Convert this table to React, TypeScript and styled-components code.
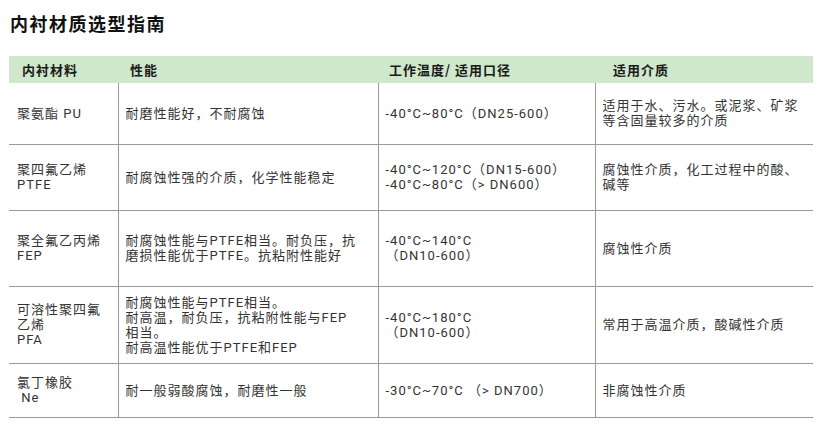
import styled, { createGlobalStyle } from 'styled-components';

const GlobalStyle = createGlobalStyle`
  body {
    margin: 0;
    background: #fff;
    font-family: Roboto, "Noto Sans CJK SC", sans-serif;
  }
`;

interface Row {
  material: string[];
  performance: string[];
  temperature: string[];
  medium: string[];
  height: number;
}

const rows: Row[] = [
  {
    material: ['聚氨酯 PU'],
    performance: ['耐磨性能好，不耐腐蚀'],
    temperature: ['-40°C~80°C（DN25-600）'],
    medium: ['适用于水、污水。或泥浆、矿浆', '等含固量较多的介质'],
    height: 61,
  },
  {
    material: ['聚四氟乙烯', 'PTFE'],
    performance: ['耐腐蚀性强的介质，化学性能稳定'],
    temperature: ['-40°C~120°C（DN15-600）', '-40°C~80°C（> DN600）'],
    medium: ['腐蚀性介质，化工过程中的酸、', '碱等'],
    height: 66,
  },
  {
    material: ['聚全氟乙丙烯', 'FEP'],
    performance: ['耐腐蚀性能与PTFE相当。耐负压，抗', '磨损性能优于PTFE。抗粘附性能好'],
    temperature: ['-40°C~140°C', '（DN10-600）'],
    medium: ['腐蚀性介质'],
    height: 76,
  },
  {
    material: ['可溶性聚四氟', '乙烯', 'PFA'],
    performance: ['耐腐蚀性能与PTFE相当。', '耐高温，耐负压，抗粘附性能与FEP', '相当。', '耐高温性能优于PTFE和FEP'],
    temperature: ['-40°C~180°C', '（DN10-600）'],
    medium: ['常用于高温介质，酸碱性介质'],
    height: 77,
  },
  {
    material: ['氯丁橡胶', '\u00a0Ne'],
    performance: ['耐一般弱酸腐蚀，耐磨性一般'],
    temperature: ['-30°C~70°C （> DN700）'],
    medium: ['非腐蚀性介质'],
    height: 54,
  },
];

const headers = [
  { label: '内衬材料', indent: 13 },
  { label: '性能', indent: 12 },
  { label: '工作温度/ 适用口径', indent: 11 },
  { label: '适用介质', indent: 18 },
];

function Lines({ lines }: { lines: string[] }) {
  return (
    <>
      {lines.map((line, key) => (
        <Line key={key}>{line}</Line>
      ))}
    </>
  );
}

function App() {
  return (
    <Page>
      <GlobalStyle />
      <Title>内衬材质选型指南</Title>
      <Table>
        <colgroup>
          <col style={{ width: 109 }} />
          <col style={{ width: 260 }} />
          <col style={{ width: 217 }} />
          <col style={{ width: 218 }} />
        </colgroup>
        <thead>
          <tr>
            {headers.map((h) => (
              <HeadCell key={h.label} $indent={h.indent}>
                {h.label}
              </HeadCell>
            ))}
          </tr>
        </thead>
        <tbody>
          {rows.map((row, key) => (
            <BodyRow key={key} $height={row.height}>
              <Cell $first>
                <Lines lines={row.material} />
              </Cell>
              <Cell>
                <Lines lines={row.performance} />
              </Cell>
              <Cell>
                <Lines lines={row.temperature} />
              </Cell>
              <Cell>
                <Lines lines={row.medium} />
              </Cell>
            </BodyRow>
          ))}
        </tbody>
      </Table>
    </Page>
  );
}

export default App;

const Page = styled.div`
  width: 838px;
  height: 430px;
  padding-top: 12px;
  box-sizing: border-box;
`;

const Title = styled.h1`
  margin: 0 0 0 10px;
  height: 44px;
  font-family: "Noto Sans CJK SC", sans-serif;
  font-size: 18px;
  font-weight: 700;
  letter-spacing: 1.5px;
  line-height: 22px;
  color: #111;
`;

const Table = styled.table`
  margin-left: 9px;
  width: 804px;
  border-collapse: collapse;
  table-layout: fixed;
`;

const HeadCell = styled.th<{ $indent: number }>`
  height: 27px;
  padding: 0 0 0 ${(p) => p.$indent}px;
  background: #cfe7cb;
  text-align: left;
  font-family: "Noto Sans CJK SC", sans-serif;
  font-size: 13px;
  font-weight: 700;
  letter-spacing: 1px;
  color: #1a1a1a;
`;

const BodyRow = styled.tr<{ $height: number }>`
  height: ${(p) => p.$height}px;
  border-bottom: 1px solid #999;
`;

const Cell = styled.td<{ $first?: boolean }>`
  padding: 0 4px 0 ${(p) => (p.$first ? 8 : 7)}px;
  border-left: ${(p) => (p.$first ? 'none' : '1px solid #999')};
  vertical-align: middle;
  font-size: 13px;
  letter-spacing: 1px;
  line-height: 15px;
  color: #333;
`;

const Line = styled.div`
  white-space: nowrap;
`;
